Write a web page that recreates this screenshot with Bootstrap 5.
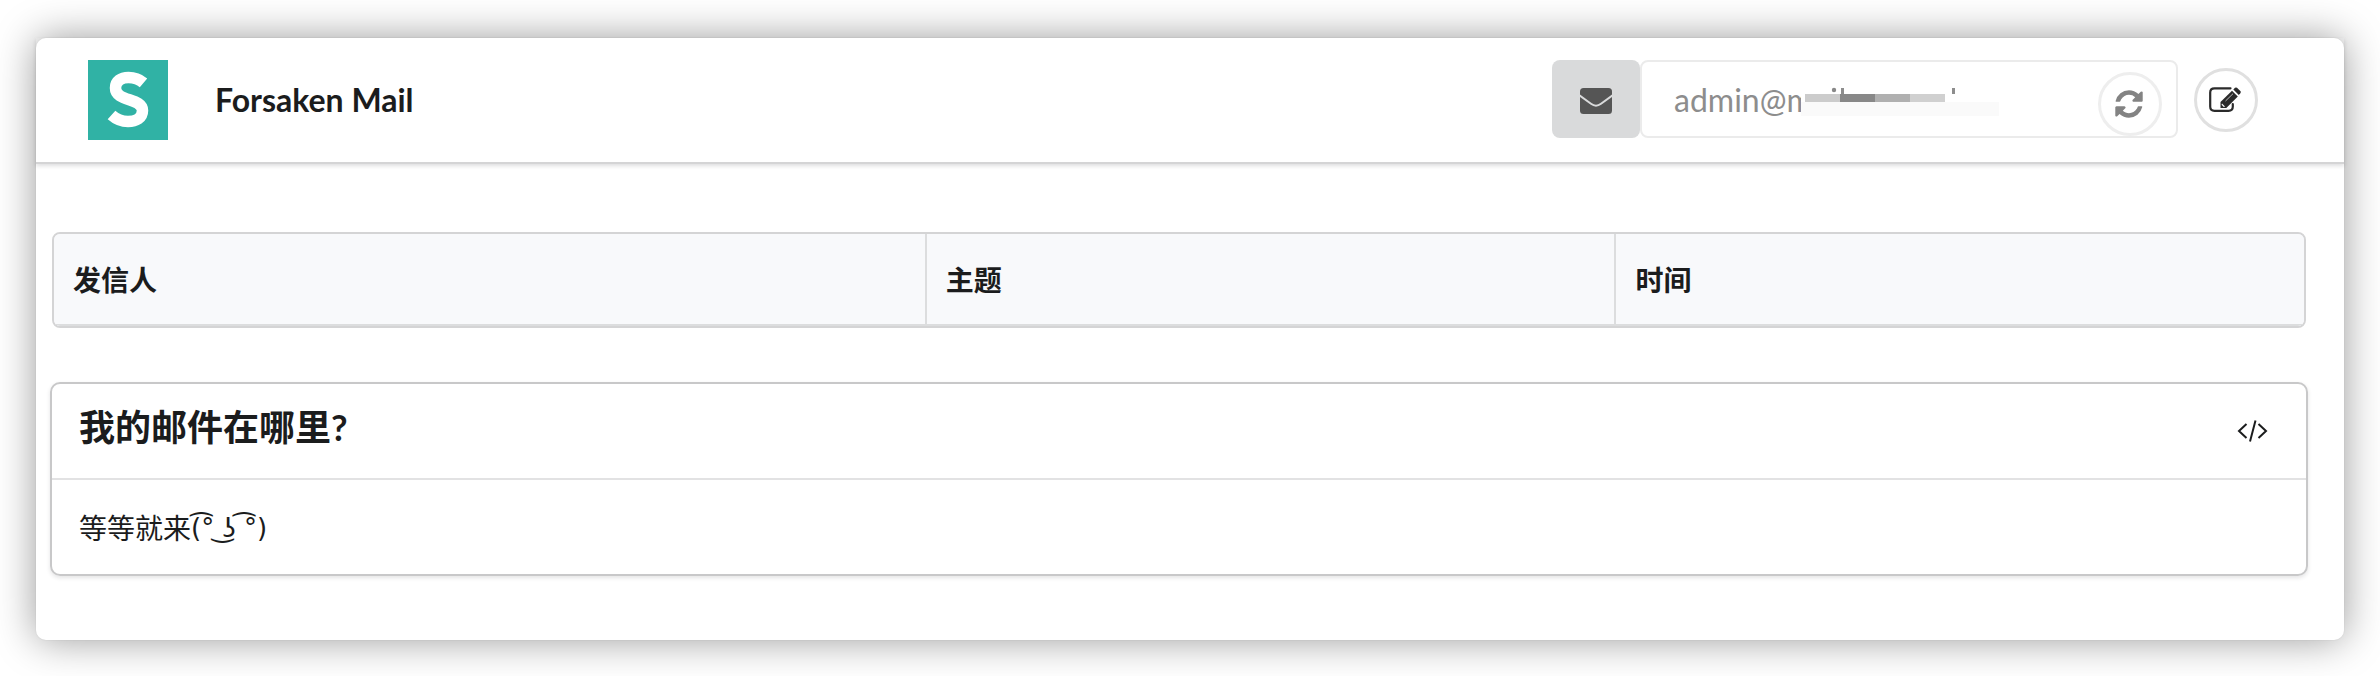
<!DOCTYPE html>
<html lang="zh-CN">
<head>
<meta charset="utf-8">
<meta name="viewport" content="width=device-width, initial-scale=1">
<title>Forsaken Mail</title>
<link href="https://cdn.jsdelivr.net/npm/bootstrap@5.3.0/dist/css/bootstrap.min.css" rel="stylesheet">
<style>
  body { font-family: Lato, "Noto Sans CJK SC", sans-serif; color: #1b1c1d; background: #fff; padding: 38px 36px 36px; }
  .mail-window { background: #fff; border-radius: 10px; box-shadow: 0 0 0 1px rgba(0,0,0,.02), 0 0 40px rgba(0,0,0,.4); }
  .mail-header { padding: 22px 86px 22px 52px; border-bottom: 2px solid #d4d4d5; box-shadow: 0 2px 4px rgba(34,36,38,.15); }
  .brand { gap: 47px; color: #1b1c1d; font-size: 32px; line-height: 40px; font-weight: 700; }
  .controls { flex: 0 1 706px; gap: 16px; height: 80px; }
  .address-label { width: 88px; height: 78px; border-radius: 8px; background: #d9dadb; color: #555; }
  .address-box { height: 78px; border: 2px solid #ebebeb; border-radius: 8px; }
  .address-box input { height: 74px; padding: 0 90px 0 32px; border: 0; background: transparent; box-shadow: none; color: #8d8d8d; font-size: 32px; line-height: 40px; }
  .address-box input:focus { background: transparent; box-shadow: none; }
  .redaction { left: 159px; top: 24px; }
  .round-btn { width: 64px; height: 64px; border: 3px solid #e0e0e0; border-radius: 50%; color: #2b2b2b; background: #fff; padding: 0 2px 0 0; flex: none; }
  .refresh-btn { right: 14px; top: 10px; border-color: #eee; color: #838383; }
  .mail-main { padding: 68px 36px 64px 14px; }
  .inbox { border: 2px solid #d4d4d5; border-radius: 8px; background: #f8f9fb; margin: 0 2px 54px; overflow: hidden; }
  .inbox table { table-layout: fixed; border-collapse: separate; border-spacing: 0; }
  .inbox th { height: 92px; padding: 2px 19px 0; background: #f8f9fb; color: #1b1c1d; font-size: 28px; line-height: 40px; font-weight: 700; border: 0; border-left: 2px solid #dcddde; border-bottom: 2px solid #dcddde; vertical-align: middle; }
  .inbox th:first-child { width: 38.7%; border-left: 0; }
  .message { border: 2px solid #c8c8c9; border-radius: 10px; box-shadow: 0 2px 4px rgba(34,36,38,.12); }
  .message-head { height: 96px; padding: 0 38px 8px 27px; border-bottom: 2px solid #e2e2e3; }
  .message-head h1 { font-size: 36px; line-height: 48px; font-weight: 700; }
  .message-body { height: 94px; padding: 2px 27px 0; font-size: 28px; line-height: 40px; }
  .kaomoji { font-family: "DejaVu Sans", sans-serif; font-size: 26px; }
</style>
</head>
<body>
<div class="mail-window">
  <header class="mail-header d-flex justify-content-between align-items-center">
    <a href="#" class="brand d-flex align-items-center text-decoration-none">
      <svg width="80" height="80" viewBox="0 0 80 80" aria-hidden="true"><rect width="80" height="80" fill="#30b2a5"/><path d="M55.5 22.8C51 19 46 17.5 40.5 17.5C33 17.5 27.5 21 27.5 28C27.5 42 54.5 37.5 54.5 50.5C54.5 58 48 61.5 40 61.5C33 61.5 28 59 23.5 55" fill="none" stroke="#fff" stroke-width="11.5"/></svg>
      <span>Forsaken Mail</span>
    </a>
    <div class="controls d-flex align-items-center">
      <div class="d-flex flex-grow-1 align-self-start">
        <label for="address" class="address-label d-flex align-items-center justify-content-center flex-shrink-0" aria-label="邮箱">
          <svg class="mt-1" width="32" height="26" viewBox="0 0 32 26"><rect width="32" height="26" rx="3.5" fill="currentColor"/><path d="M-1 7L11 15.8Q16 19.5 21 15.8L33 7" fill="none" stroke="#d9dadb" stroke-width="2"/></svg>
        </label>
        <div class="address-box position-relative flex-grow-1">
          <input id="address" type="text" class="form-control" value="admin@m" readonly>
          <svg class="redaction position-absolute" width="198" height="34" viewBox="0 0 198 34" aria-hidden="true">
            <path fill="#fff" d="M0 0h198v34H0z"/><path fill="#fafafa" d="M0 16h198v14H0z"/>
            <path fill="#ccc" d="M4 8h35v8H4z"/><path fill="#888" d="M39 8h35v8H39z"/><path fill="#b0b0b0" d="M74 8h35v8H74z"/><path fill="#d0d0d0" d="M109 8h35v8h-35z"/>
            <circle cx="33" cy="4" r="2.2" fill="#888"/><path fill="#8d8d8d" d="M40 2h3v6h-3zM151 2h3v6h-3z"/>
          </svg>
          <button type="button" class="btn round-btn refresh-btn position-absolute d-flex align-items-center justify-content-center" aria-label="刷新">
            <svg width="32" height="32" viewBox="0 0 1792 1792" fill="currentColor"><path d="M1639 1056q0 5-1 7-64 268-268 434.5t-478 166.5q-146 0-282.5-55t-243.5-157l-129 129q-19 19-45 19t-45-19-19-45v-448q0-26 19-45t45-19h448q26 0 45 19t19 45-19 45l-137 137q71 66 161 102t187 36q134 0 250-65t186-179q11-17 53-117 8-23 30-23h192q13 0 22.5 9.5t9.5 22.5zm25-800v448q0 26-19 45t-45 19h-448q-26 0-45-19t-19-45 19-45l138-138q-148-137-349-137-134 0-250 65t-186 179q-11 17-53 117-8 23-30 23h-199q-13 0-22.5-9.5t-9.5-22.5v-7q65-268 270-434.5t480-166.5q146 0 284 55.5t245 156.5l130-129q19-19 45-19t45 19 19 45z"/></svg>
          </button>
        </div>
      </div>
      <button type="button" class="btn round-btn d-flex align-items-center justify-content-center" aria-label="编辑">
        <svg width="32" height="26" viewBox="0 0 32 26"><path d="M21.5 1.3H5.5Q1.2 1.3 1.2 5.5V19.5Q1.2 23.8 5.5 23.8H19.5Q23.8 23.8 23.8 19.5V17" fill="none" stroke="currentColor" stroke-width="2.2" stroke-linecap="round"/><path d="M11.5 21V15L23 3.7L28.8 9.5L17.3 21z" fill="currentColor"/><path d="M24.3 2.5L26 .8Q27 0 28 .8L31.3 4Q32.3 5 31.3 6.2L29.8 7.9z" fill="currentColor"/><path d="M13 16.5L16 19.5L14.8 20L12.6 17.7z" fill="#fff"/><path d="M16.5 14L24 6.7" stroke="#bbb" stroke-width="1"/></svg>
      </button>
    </div>
  </header>
  <main class="mail-main">
    <div class="inbox">
      <table class="table mb-0">
        <thead><tr><th scope="col">发信人</th><th scope="col">主题</th><th scope="col">时间</th></tr></thead>
      </table>
    </div>
    <article class="message">
      <div class="message-head d-flex align-items-center justify-content-between">
        <h1 class="mb-0">我的邮件在哪里?</h1>
        <button type="button" class="btn p-0 border-0 d-flex mt-2" aria-label="查看源码">
          <svg width="32" height="24" viewBox="0 0 32 24" fill="none" stroke="#1b1c1d" stroke-width="2"><path d="M10.5 5L3 12L10.5 19M22.5 5L30 12L22.5 19M19.5 1.5L14 22.5"/></svg>
        </button>
      </div>
      <div class="message-body d-flex align-items-center">等等就来<span class="kaomoji">(͡° ͜ʖ ͡°)</span></div>
    </article>
  </main>
</div>
<script src="https://cdn.jsdelivr.net/npm/bootstrap@5.3.0/dist/js/bootstrap.bundle.min.js"></script>
</body>
</html>
